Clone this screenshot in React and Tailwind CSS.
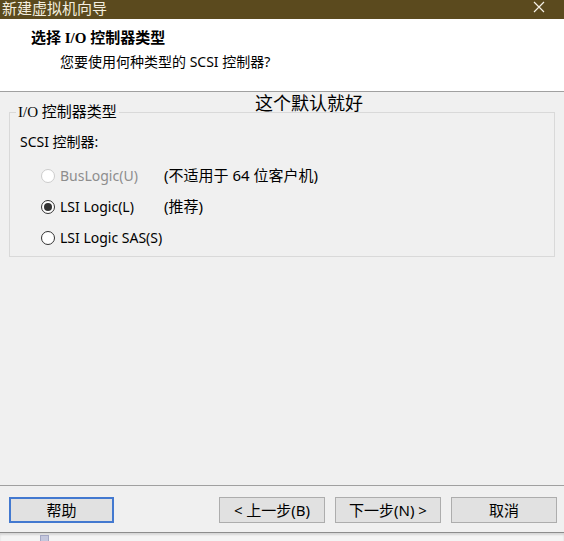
import React from 'react';

const CJK = { fontFamily: '"Noto Sans", "Noto Sans CJK SC", sans-serif' };

function Radio({ checked, disabled }) {
  return (
    <span
      className={
        'flex items-center justify-center w-[14px] h-[14px] rounded-full border bg-white shrink-0 ' +
        (disabled ? 'border-[#cccccc]' : 'border-[#333333]')
      }
    >
      {checked && <span className="w-[8px] h-[8px] rounded-full bg-[#333333]" />}
    </span>
  );
}

const OPTIONS = [
  { label: 'BusLogic(U)', note: '(不适用于 64 位客户机)', disabled: true },
  { label: 'LSI Logic(L)', note: '(推荐)', checked: true },
  { label: 'LSI Logic SAS(S)', note: '' },
];

function Btn({ children, focused }) {
  return (
    <button
      className={
        'h-[26px] flex items-center justify-center bg-[#e1e1e1] text-[15px] text-black ' +
        (focused ? 'w-[105px] border-2 border-[#4379d0]' : 'w-[106px] border border-[#adadad]')
      }
    >
      {children}
    </button>
  );
}

export default function App() {
  return (
    <div className="w-[564px] h-[541px] flex flex-col bg-[#f0f0f0] overflow-hidden text-black" style={CJK}>
      {/* title bar */}
      <div className="h-[19px] shrink-0 bg-[#5b4a1e] flex items-start justify-between overflow-hidden">
        <span className="ml-[2px] -mt-[2px] text-[15px] leading-[20px] text-[#f3eedf]">新建虚拟机向导</span>
        <svg width="12" height="12" viewBox="0 0 12 12" className="mr-[19px] mt-[1px]">
          <path d="M1 1 L11 11 M11 1 L1 11" stroke="#f5f1e6" strokeWidth="1.2" />
        </svg>
      </div>

      {/* header */}
      <div className="h-[73px] shrink-0 bg-white border-b border-[#a0a0a0] pl-[31px] pt-[9px]">
        <div
          className="text-[15px] leading-[20px] font-bold"
          style={{ fontFamily: '"Liberation Serif", "Noto Sans CJK SC", serif' }}
        >
          选择 I/O 控制器类型
        </div>
        <div className="mt-[4px] pl-[29px] text-[14px] leading-[20px]">您要使用何种类型的 SCSI 控制器?</div>
      </div>

      {/* body */}
      <div className="relative flex-1 px-[9px] pt-[10px]">
        <span className="absolute left-[255px] top-0 text-[18px] leading-[22px]">这个默认就好</span>
        <fieldset className="border border-[#d9d9d9] pb-[3px]">
          <legend
            className="ml-[6px] px-[2px] text-[15px] leading-[20px]"
            style={{ fontFamily: '"Liberation Serif", "Noto Sans CJK SC", serif' }}
          >
            I/O 控制器类型
          </legend>
          <div className="pl-[10px] pt-[10px] text-[14px] leading-[20px]">SCSI 控制器:</div>
          <div className="mt-[8px] flex flex-col">
            {OPTIONS.map((o) => (
              <div key={o.label} className="h-[31px] flex items-center pl-[31px] text-[14px]">
                <Radio checked={o.checked} disabled={o.disabled} />
                <span className={'ml-[5px] w-[104px] ' + (o.disabled ? 'text-[#8d8d8d]' : '')}>{o.label}</span>
                <span className="text-[15px]">{o.note}</span>
              </div>
            ))}
          </div>
        </fieldset>
      </div>

      {/* buttons */}
      <div className="h-[47px] shrink-0 border-t border-[#a0a0a0] flex items-start px-[9px] pt-[11px]">
        <Btn focused>帮助</Btn>
        <div className="ml-auto mr-[-2px] flex gap-[10px]">
          <Btn>&lt; 上一步(B)</Btn>
          <Btn>下一步(N) &gt;</Btn>
          <Btn>取消</Btn>
        </div>
      </div>

      {/* outside window */}
      <div className="h-[9px] shrink-0 bg-[#f4f4f4] border-t border-[#8c8c8c] shadow-[inset_0_2px_2px_rgba(0,0,0,0.12)] relative">
        <div className="absolute left-[40px] top-[2px] w-[9px] h-[8px] bg-[#c4c7dd] border border-[#a3a7c4]" />
      </div>
    </div>
  );
}
